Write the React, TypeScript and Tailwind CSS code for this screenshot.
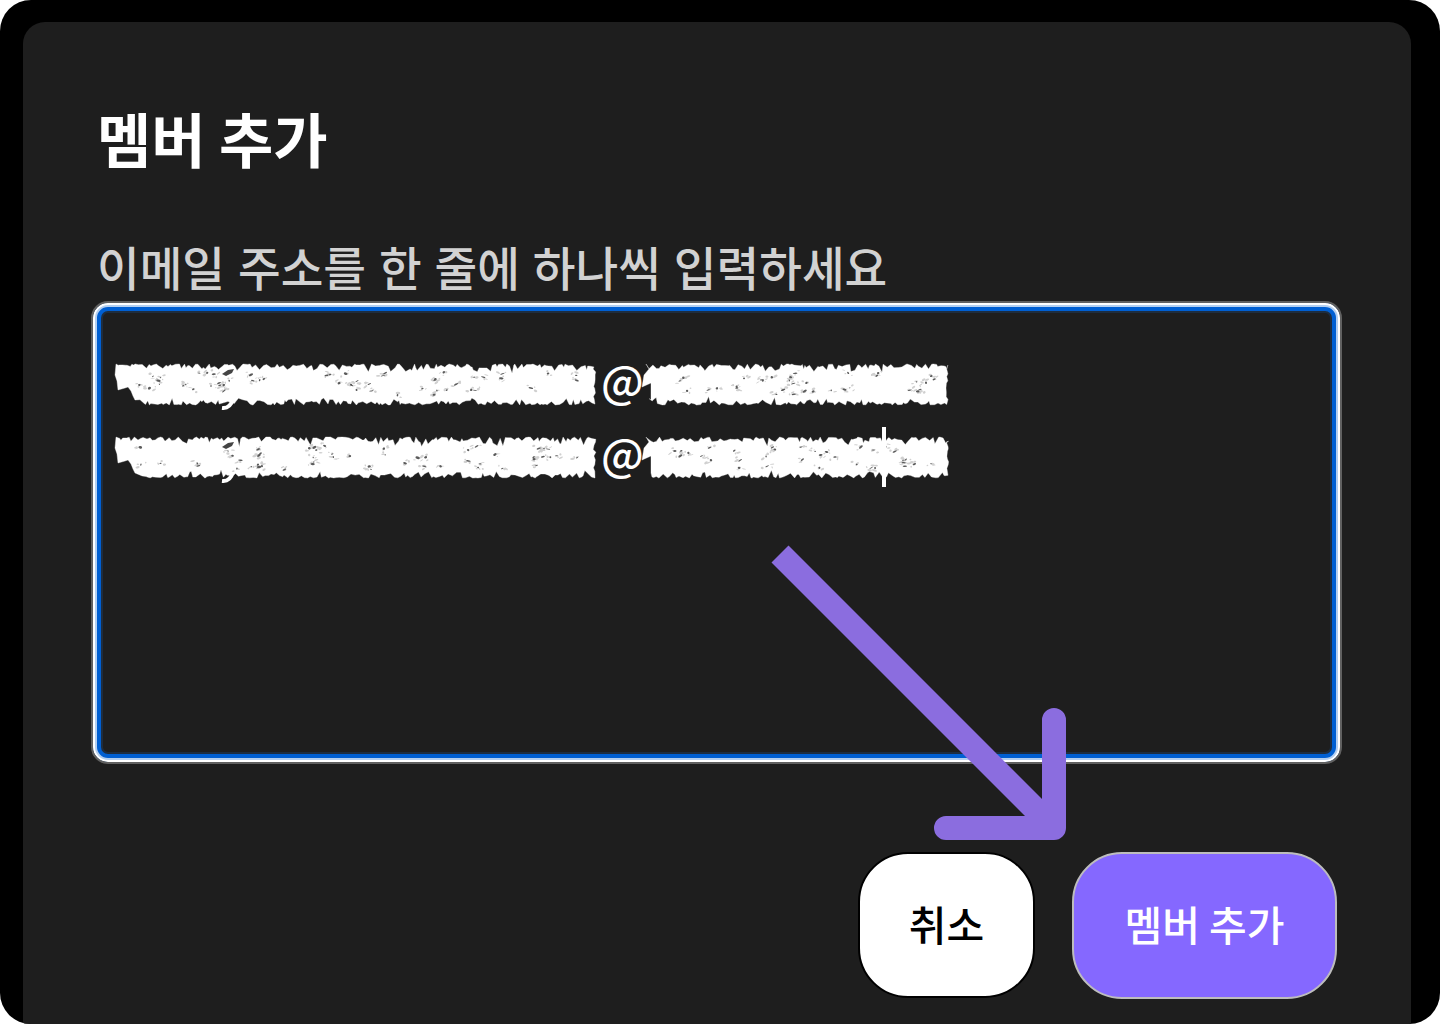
import { useMemo } from "react";

type ScribbleProps = {
    width: number
    seed: number
    notch?: boolean
    tail?: boolean
}

function createRandom(seed: number) {
    let state = seed

    return () => {
        state = (state * 16807) % 2147483647
        return state / 2147483647
    }
}

// rough chalk strokes that hide a part of the address
function Scribble({ width, seed, notch = false, tail = false }: ScribbleProps) {
    const { outline, specks, greys } = useMemo(() => {
        const random = createRandom(seed)
        const points: string[] = []

        for (let x = 1; x < width; x += 1 + random() * 3.5) {
            points.push(`${x.toFixed(1)},${(3 + random() * random() * 10).toFixed(1)}`)
        }
        for (let y = 8; y < 38; y += 2 + random() * 3) {
            points.push(`${(width - random() * 3).toFixed(1)},${y.toFixed(1)}`)
        }
        for (let x = width - 1; x > (notch ? 24 : 4); x -= 1 + random() * 3.5) {
            points.push(`${x.toFixed(1)},${(44 - random() * random() * 9).toFixed(1)}`)
        }
        if (notch) {
            points.push("20,39", "18,35", "16,30", "13,26", "10,27", "3,29", "2,20", "0,14")
        } else {
            points.push("6,39", "6,22", "-3,26", "-1,14", "4,8")
        }

        const marks: { x: number, y: number, w: number, h: number, angle: number }[] = []
        const count = Math.round(width / 9)
        for (let i = 0; i < count; i++) {
            const x = 24 + random() * (width - 36)
            const y = 11 + random() * 25

            // every dark speck has a few faint ones near it
            for (let j = 0; j < 4; j++) {
                marks.push({
                    x: x + (j ? random() * 10 - 5 : 0),
                    y: y + (j ? random() * 6 - 3 : 0),
                    w: 0.6 + random() * 1.8,
                    h: 0.4 + random() * 0.9,
                    angle: -40 + random() * 60
                })
            }
        }

        return {
            outline: points.join(" "),
            specks: marks.filter((_, index) => index % 4 === 0),
            greys: marks.filter((_, index) => index % 4 !== 0)
        }
    }, [width, seed, notch])

    return (
        <svg className="shrink-0 overflow-visible" width={width} height="48" viewBox={`0 0 ${width} 48`}>
            <polygon points={outline} fill="#fff" stroke="#fff" strokeOpacity="0.45" strokeWidth="0.8"/>
            {greys.map((mark, index) => (
                <ellipse key={index} cx={mark.x} cy={mark.y} rx={mark.w} ry={mark.h} fill="#d0d0d0"
                         transform={`rotate(${mark.angle} ${mark.x} ${mark.y})`}/>
            ))}
            {specks.map((mark, index) => (
                <ellipse key={index} cx={mark.x} cy={mark.y} rx={mark.w} ry={mark.h} fill="#5a5a5a"
                         transform={`rotate(${mark.angle} ${mark.x} ${mark.y})`}/>
            ))}
            {tail && (
                <>
                    <path d="M107 13 L113 9 L119 8 L117 12 L111 15 Z" fill="#444"/>
                    <path d="M107 47 Q115 48 118 38" fill="none" stroke="#fff" strokeWidth="4"/>
                </>
            )}
        </svg>
    )
}

function MemberRow({ seed }: { seed: number }) {
    return (
        <div className="flex h-[73px] items-center">
            <Scribble width={481} seed={seed} notch tail/>
            <span className="w-[49px] shrink-0 pb-[12px] pl-[5px] text-[44px] leading-[48px] font-medium text-white">@</span>
            <Scribble width={304} seed={seed + 40}/>
        </div>
    )
}

function Arrow() {
    return (
        <svg className="pointer-events-none absolute top-[540px] left-[765px]" width="310" height="310" viewBox="765 540 310 310">
            <path d="M780 554 L1054 828" fill="none" stroke="#8b6ddf" strokeWidth="24"/>
            <path d="M946 828 H1054 V720" fill="none" stroke="#8b6ddf" strokeWidth="24" strokeLinecap="round" strokeLinejoin="round"/>
        </svg>
    )
}

export default function App() {
    return (
        <div className="h-[1024px] w-[1440px] bg-white font-['Noto_Sans_CJK_KR',sans-serif]">
            <div className="relative h-full w-full overflow-hidden rounded-[31px] bg-black pt-[22px] pr-[29px] pl-[23px]">
                <div className="flex h-full flex-col rounded-t-[22px] bg-[#1e1e1e] pt-[74px] pr-[69px] pl-[68px]">
                    <h1 className="pl-[6px] text-[59px] leading-[84px] font-bold text-white">멤버 추가</h1>
                    <label className="mt-[51px] mb-px pl-[6px] text-[46.4px] leading-[69px] font-medium [word-spacing:2.5px] text-[#d2d2d2]" htmlFor="members">
                        이메일 주소를 한 줄에 하나씩 입력하세요
                    </label>
                    <div id="members"
                         className="relative h-[463px] shrink-0 rounded-[17px] border-2 border-[#606060] pt-[45px] pl-[22px] shadow-[inset_0_0_0_2px_#ffffff,inset_0_0_0_4px_#b3cff1,inset_0_0_0_8px_#005fd2,inset_0_0_0_10px_#1d2d40]">
                        <MemberRow seed={731}/>
                        <MemberRow seed={1973}/>
                        <div className="absolute top-[124px] left-[789px] h-[60px] w-[4px] bg-white"/>
                    </div>
                    <div className="mt-[88px] flex justify-end gap-[37px] pr-[5px]">
                        <button className="h-[146px] w-[177px] rounded-[50px] border-2 border-black bg-white pb-[2px] text-[41px] font-medium text-black">
                            취소
                        </button>
                        <button className="h-[147px] w-[265px] rounded-[50px] border-2 border-[#bdbdbd] bg-[#8568ff] pb-[3px] text-[41px] font-medium text-white">
                            멤버 추가
                        </button>
                    </div>
                </div>
                <Arrow/>
            </div>
        </div>
    )
}
